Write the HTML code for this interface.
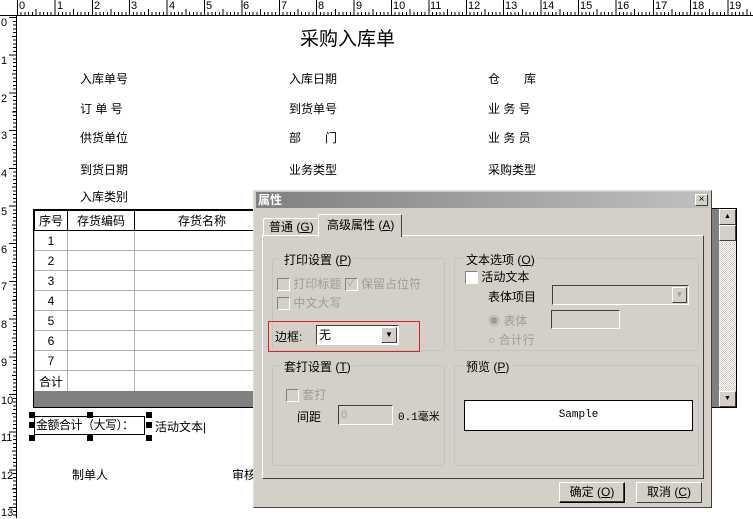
<!DOCTYPE html>
<html><head><meta charset="utf-8"><style>
*{margin:0;padding:0;box-sizing:border-box}
body{width:753px;height:518px;overflow:hidden;background:#fff;font-family:"Liberation Sans","Noto Sans CJK SC","WenQuanYi Zen Hei",sans-serif;font-size:12px;color:#000;position:relative}
.a{position:absolute;white-space:nowrap}
#rt{left:0;top:0;width:753px;height:16px;border-bottom:1px solid #000;
background:
repeating-linear-gradient(90deg,#000 0 1px,transparent 1px 37.4px) 17px 0/100% 15px no-repeat,
repeating-linear-gradient(90deg,#000 0 1px,transparent 1px 18.7px) 17px 9px/100% 6px no-repeat,
repeating-linear-gradient(90deg,#000 0 1px,transparent 1px 3.74px) 17px 12px/100% 3px no-repeat}
#rl{left:0;top:16px;width:17px;height:502px;border-right:1px solid #000;
background:
repeating-linear-gradient(180deg,#000 0 1px,transparent 1px 37.7px) 9px 1px/7px 100% no-repeat,
repeating-linear-gradient(180deg,#000 0 1px,transparent 1px 18.85px) 12px 1px/4px 100% no-repeat,
repeating-linear-gradient(180deg,#000 0 1px,transparent 1px 3.77px) 13px 1px/3px 100% no-repeat}
.tn{position:absolute;top:1px;font-size:11px;line-height:11px}
.ln{position:absolute;left:1px;font-size:11px;line-height:11px}
table{border-collapse:collapse;table-layout:fixed}
td{border:1px solid #a9b5b5;height:20px;text-align:center;font-size:12px;overflow:hidden;white-space:nowrap}
.dlg{left:253px;top:190px;width:459px;height:318px;background:#d4d0c8;border:1px solid;border-color:#e0ddd5 #404040 #404040 #e0ddd5}
.tb{left:2px;top:1px;width:453px;height:16px;background:linear-gradient(90deg,#808080,#c0c0c0);color:#fff;font-weight:bold;padding-left:2px;line-height:16px}
.gb{position:absolute;border:1px solid #bcc4cc;border-radius:3px}
.gt{position:absolute;top:-8px;left:8px;background:#d4d0c8;padding:0 3px}
.cb{display:inline-block;width:13px;height:13px;background:#fff;border:1px solid;border-color:#808080 #fff #fff #808080;vertical-align:middle}
.dis{color:#a09c94}
.btn{position:absolute;width:66px;height:21px;border:1px solid;border-color:#fff #404040 #404040 #fff;text-align:center;line-height:19px;background:#d4d0c8}
</style></head><body>
<div class="a" id="rt"></div>
<div class="a" id="rl"></div>
<span class="tn" style="left:19px">0</span><span class="tn" style="left:57px">1</span><span class="tn" style="left:94px">2</span><span class="tn" style="left:131px">3</span><span class="tn" style="left:169px">4</span><span class="tn" style="left:206px">5</span><span class="tn" style="left:243px">6</span><span class="tn" style="left:281px">7</span><span class="tn" style="left:318px">8</span><span class="tn" style="left:356px">9</span><span class="tn" style="left:393px">10</span><span class="tn" style="left:430px">11</span><span class="tn" style="left:468px">12</span><span class="tn" style="left:505px">13</span><span class="tn" style="left:542px">14</span><span class="tn" style="left:580px">15</span><span class="tn" style="left:617px">16</span><span class="tn" style="left:655px">17</span><span class="tn" style="left:692px">18</span><span class="tn" style="left:729px">19</span>
<span class="ln" style="top:18px">0</span><span class="ln" style="top:56px">1</span><span class="ln" style="top:94px">2</span><span class="ln" style="top:131px">3</span><span class="ln" style="top:169px">4</span><span class="ln" style="top:207px">5</span><span class="ln" style="top:245px">6</span><span class="ln" style="top:282px">7</span><span class="ln" style="top:320px">8</span><span class="ln" style="top:358px">9</span><span class="ln" style="top:396px">10</span><span class="ln" style="top:433px">11</span><span class="ln" style="top:471px">12</span><span class="ln" style="top:508px">13</span>

<div class="a" style="left:300px;top:24px;font-size:19px">采购入库单</div>
<div class="a" style="left:80px;top:70px">入库单号</div><div class="a" style="left:289px;top:70px">入库日期</div><div class="a" style="left:488px;top:70px">仓　　库</div>
<div class="a" style="left:80px;top:100px">订 单 号</div><div class="a" style="left:289px;top:100px">到货单号</div><div class="a" style="left:488px;top:100px">业 务 号</div>
<div class="a" style="left:80px;top:129px">供货单位</div><div class="a" style="left:289px;top:129px">部　　门</div><div class="a" style="left:488px;top:129px">业 务 员</div>
<div class="a" style="left:80px;top:161px">到货日期</div><div class="a" style="left:289px;top:161px">业务类型</div><div class="a" style="left:488px;top:161px">采购类型</div>
<div class="a" style="left:80px;top:188px">入库类别</div>

<div class="a" style="left:33px;top:209px;width:680px;height:199px;border:1px solid #000;border-right:none;overflow:hidden">
<table style="width:680px">
<colgroup><col style="width:33px"><col style="width:67px"><col style="width:135px"><col></colgroup>
<tr><td style="border-color:#000">序号</td><td style="border-color:#000">存货编码</td><td style="border-color:#000">存货名称</td><td style="border-color:#000"></td></tr>
<tr><td>1</td><td></td><td></td><td></td></tr><tr><td>2</td><td></td><td></td><td></td></tr><tr><td>3</td><td></td><td></td><td></td></tr><tr><td>4</td><td></td><td></td><td></td></tr><tr><td>5</td><td></td><td></td><td></td></tr><tr><td>6</td><td></td><td></td><td></td></tr><tr><td>7</td><td></td><td></td><td></td></tr>
<tr><td style="height:22px">合计</td><td></td><td></td><td></td></tr>
</table>
<div style="position:absolute;left:0;top:181px;width:680px;height:18px;background:#808080"></div>
</div>
<div class="a" style="left:711px;top:208px;width:26px;height:200px;background:#808080;border:1px solid #000"></div>
<div class="a" style="left:719px;top:209px;width:17px;height:198px;background:repeating-conic-gradient(#fff 0 25%,#d4d0c8 0 50%) 0 0/2px 2px"></div>
<div class="a" style="left:719px;top:209px;width:17px;height:16px;background:#d4d0c8;border:1px solid;border-color:#fff #404040 #404040 #fff;font-size:7px;text-align:center;line-height:14px">▲</div>
<div class="a" style="left:719px;top:225px;width:17px;height:16px;background:#d4d0c8;border:1px solid;border-color:#fff #404040 #404040 #fff"></div>
<div class="a" style="left:719px;top:391px;width:17px;height:16px;background:#d4d0c8;border:1px solid;border-color:#fff #404040 #404040 #fff;font-size:7px;text-align:center;line-height:14px">▼</div>

<div class="a" style="left:34px;top:416px;width:111px;height:19px;border:1px solid #000;line-height:17px;padding-left:1px;letter-spacing:-0.5px">金额合计（大写）：</div>
<div class="a" style="left:29px;top:412px;width:6px;height:6px;background:#000"></div><div class="a" style="left:87px;top:412px;width:6px;height:6px;background:#000"></div><div class="a" style="left:146px;top:412px;width:6px;height:6px;background:#000"></div>
<div class="a" style="left:29px;top:422px;width:6px;height:6px;background:#000"></div><div class="a" style="left:146px;top:422px;width:6px;height:6px;background:#000"></div>
<div class="a" style="left:29px;top:435px;width:6px;height:6px;background:#000"></div><div class="a" style="left:87px;top:435px;width:6px;height:6px;background:#000"></div><div class="a" style="left:146px;top:435px;width:6px;height:6px;background:#000"></div>
<div class="a" style="left:155px;top:418px">活动文本|</div>
<div class="a" style="left:72px;top:466px">制单人</div><div class="a" style="left:232px;top:466px">审核</div>

<div class="a dlg">
<div class="a tb">属性</div>
<div class="a" style="left:441px;top:3px;width:13px;height:12px;background:#d4d0c8;border:1px solid;border-color:#fff #404040 #404040 #fff;font-size:10px;line-height:10px;text-align:center">×</div>
<div class="a" style="left:8px;top:44px;width:442px;height:244px;border:1px solid;border-color:#fff #404040 #404040 #fff"></div>
<div class="a" style="left:9px;top:27px;width:56px;height:18px;border:1px solid;border-bottom:none;border-color:#fff #404040 #404040 #fff;border-radius:2px 2px 0 0;padding-left:5px;line-height:17px">普通 (<u>G</u>)</div>
<div class="a" style="left:64px;top:23px;width:84px;height:23px;background:#d4d0c8;border:1px solid;border-bottom:none;border-color:#fff #404040 #404040 #fff;border-radius:2px 2px 0 0;padding-left:8px;line-height:20px">高级属性 (<u>A</u>)</div>

<div class="gb" style="left:18px;top:67px;width:173px;height:93px"><span class="gt">打印设置 (<u>P</u>)</span>
<div class="a dis" style="left:4px;top:16px"><span class="cb" style="background:#d4d0c8"></span> 打印标题 <span class="cb" style="background:#d4d0c8;font-size:10px;line-height:10px;text-align:center">✓</span> 保留占位符</div>
<div class="a dis" style="left:4px;top:35px"><span class="cb" style="background:#d4d0c8"></span> 中文大写</div>
</div>
<div class="a" style="left:14px;top:130px;width:152px;height:31px;border:1px solid #e02020;z-index:5"></div>
<div class="a" style="left:21px;top:137px">边框:</div>
<div class="a" style="left:62px;top:134px;width:83px;height:20px;background:#fff;border:1px solid;border-color:#404040 #fff #fff #404040;padding-left:2px;line-height:18px">无</div>
<div class="a" style="left:127px;top:136px;width:16px;height:16px;background:#d4d0c8;border:1px solid;border-color:#fff #404040 #404040 #fff;font-size:8px;text-align:center;line-height:14px">▼</div>

<div class="gb" style="left:200px;top:67px;width:245px;height:93px"><span class="gt">文本选项 (<u>O</u>)</span>
<div class="a" style="left:10px;top:9px"><span class="cb"></span> 活动文本</div>
<div class="a" style="left:33px;top:29px">表体项目</div>
<div class="a" style="left:97px;top:26px;width:137px;height:20px;border:1px solid;border-color:#404040 #fff #fff #404040"></div>
<div class="a" style="left:217px;top:28px;width:15px;height:16px;border:1px solid;border-color:#fff #404040 #404040 #fff;font-size:8px;color:#a09c94;text-align:center;line-height:14px">▼</div>
<div class="a dis" style="left:33px;top:53px">◉ 表体</div>
<div class="a" style="left:96px;top:51px;width:69px;height:19px;border:1px solid;border-color:#404040 #fff #fff #404040"></div>
<div class="a dis" style="left:33px;top:72px">○ 合计行</div>
</div>

<div class="gb" style="left:18px;top:174px;width:173px;height:101px"><span class="gt">套打设置 (<u>T</u>)</span>
<div class="a dis" style="left:13px;top:20px"><span class="cb" style="background:#d4d0c8"></span> 套打</div>
<div class="a" style="left:24px;top:42px">间距</div>
<div class="a" style="left:65px;top:39px;width:55px;height:20px;border:1px solid;border-color:#404040 #fff #fff #404040;color:#a09c94;font-size:11px;padding-left:2px;line-height:18px">0</div>
<div class="a" style="left:125px;top:42px;font-family:'Liberation Mono','Noto Sans CJK SC',monospace;font-size:11px">0.1毫米</div>
</div>
<div class="gb" style="left:200px;top:174px;width:245px;height:101px"><span class="gt">预览 (<u>P</u>)</span>
<div class="a" style="left:9px;top:34px;width:229px;height:31px;background:#fff;border:1px solid #000;text-align:center;line-height:29px;font-family:'Liberation Mono',monospace;font-size:11px">Sample</div>
</div>

<div class="btn" style="left:305px;top:291px;border-color:#fff #000 #000 #fff;box-shadow:inset -1px -1px #404040">确定 (<u>O</u>)</div>
<div class="btn" style="left:382px;top:291px">取消 (<u>C</u>)</div>
</div>
</body></html>
